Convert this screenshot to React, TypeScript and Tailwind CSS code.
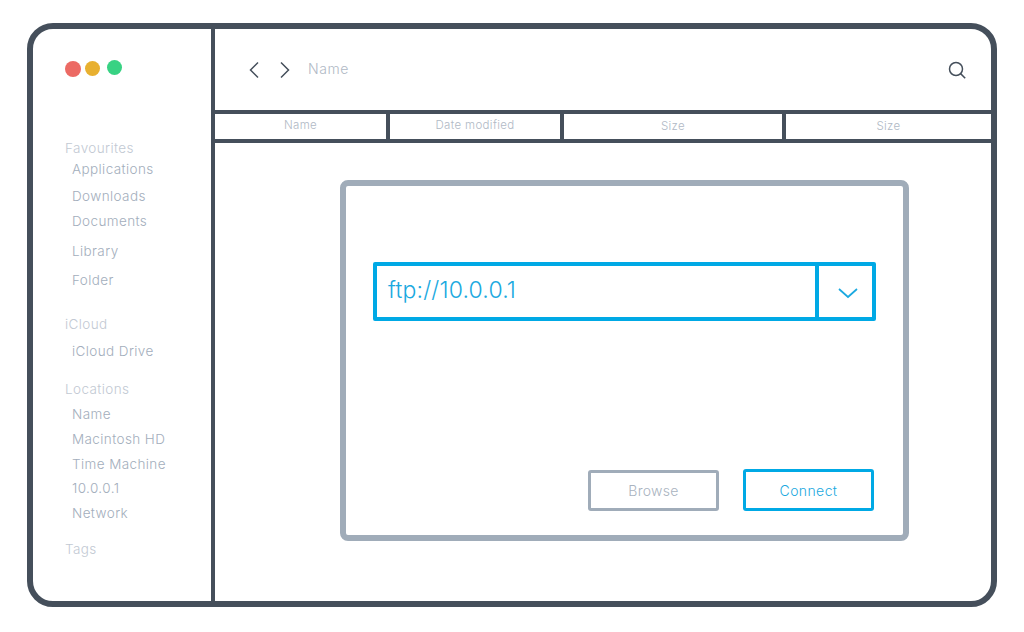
const font = "font-['Inter','Liberation_Sans',sans-serif]";

const sidebar: { label: string; cls: string }[] = [
  { label: "Favourites", cls: "mt-[61px] text-[#c2c9d3]" },
  { label: "Applications", cls: "mt-[1px] ml-[7px] text-[#a3aebc]" },
  { label: "Downloads", cls: "mt-[7px] ml-[7px] text-[#a3aebc]" },
  { label: "Documents", cls: "mt-[5px] ml-[7px] text-[#a3aebc]" },
  { label: "Library", cls: "mt-[10px] ml-[7px] text-[#a3aebc]" },
  { label: "Folder", cls: "mt-[9px] ml-[7px] text-[#a3aebc]" },
  { label: "iCloud", cls: "mt-[24px] text-[#c2c9d3]" },
  { label: "iCloud Drive", cls: "mt-[7px] ml-[7px] text-[#a3aebc]" },
  { label: "Locations", cls: "mt-[18px] text-[#c2c9d3]" },
  { label: "Name", cls: "mt-[5px] ml-[7px] text-[#a3aebc]" },
  { label: "Macintosh HD", cls: "mt-[5px] ml-[7px] text-[#a3aebc]" },
  { label: "Time Machine", cls: "mt-[5px] ml-[7px] text-[#a3aebc]" },
  { label: "10.0.0.1", cls: "mt-[4px] ml-[7px] text-[#a3aebc]" },
  { label: "Network", cls: "mt-[5px] ml-[7px] text-[#a3aebc]" },
  { label: "Tags", cls: "mt-[16px] text-[#c2c9d3]" },
];

export default function App() {
  return (
    <div className={`${font} w-[1024px] h-[632px] bg-white pt-[23px] pl-[27px] font-light`}>
      <div className="w-[970px] h-[584px] border-[6px] border-[#454f5b] rounded-[26px] flex overflow-hidden">
        <aside className="w-[182px] shrink-0 border-r-[4px] border-[#454f5b] pl-[32px] pt-[31px]">
          <div className="flex items-start">
            <span className="w-[16px] h-[16px] mt-[1px] rounded-full bg-[#ec6a64]" />
            <span className="w-[15px] h-[15px] ml-[4px] mt-[1px] rounded-full bg-[#e8b030]" />
            <span className="w-[15px] h-[15px] ml-[7px] rounded-full bg-[#38d283]" />
          </div>
          <div className="text-[13.5px] tracking-[0.4px] leading-[20px]">
            {sidebar.map((s) => (
              <div key={s.label + s.cls} className={s.cls}>
                {s.label}
              </div>
            ))}
          </div>
        </aside>
        <main className="flex-1 flex flex-col min-w-0">
          <div className="h-[85px] shrink-0 border-b-[4px] border-[#454f5b] flex items-center pl-[33px] pr-[25px]">
            <svg width="12" height="18" viewBox="0 0 12 18" fill="none" stroke="#454f5b" strokeWidth="1.5" className="mt-[1px]">
              <path d="M10 1.5 2.5 9l7.5 7.5" />
            </svg>
            <svg width="12" height="18" viewBox="0 0 12 18" fill="none" stroke="#454f5b" strokeWidth="1.5" className="ml-[19px] mt-[1px]">
              <path d="M2 1.5 9.5 9 2 16.5" />
            </svg>
            <span className="ml-[17px] text-[14px] tracking-[0.6px] text-[#b0b9c5] -mt-[3px]">Name</span>
            <svg width="18" height="18" viewBox="0 0 18 18" fill="none" stroke="#454f5b" strokeWidth="1.5" className="ml-auto mt-[1px]">
              <circle cx="8" cy="8" r="6.5" />
              <path d="m12.6 12.6 4.6 4.6" />
            </svg>
          </div>
          <div className="h-[29px] shrink-0 border-b-[4px] border-[#454f5b] flex text-[11.5px] tracking-[0.35px] text-[#b0b9c5]">
            <div className="w-[175px] border-r-[4px] border-[#454f5b] flex items-center justify-center pb-[2px]">Name</div>
            <div className="w-[174px] border-r-[4px] border-[#454f5b] flex items-center justify-center pb-[2px]">Date modified</div>
            <div className="w-[222px] border-r-[4px] border-[#454f5b] flex items-center justify-center pt-[1px]">Size</div>
            <div className="flex-1 flex items-center justify-center pt-[1px]">Size</div>
          </div>
          <div className="flex-1 pl-[125px] pt-[37px]">
            <div className="w-[569px] h-[361px] border-[6px] border-[#a0acb9] rounded-[8px] pl-[27px] pt-[76px] flex flex-col">
              <div className="w-[503px] h-[59px] border-[4px] border-[#00a9e5] rounded-[2px] flex">
                <div className="flex-1 border-r-[4px] border-[#00a9e5] flex items-center pl-[11px] text-[23px] tracking-[0.15px] text-[#1ba9e0] pb-[2px]">
                  ftp://10.0.0.1
                </div>
                <div className="w-[53px] flex items-center justify-center pl-[4px]">
                  <svg width="20" height="11" viewBox="0 0 20 11" fill="none" stroke="#1ba9e0" strokeWidth="1.7" className="mt-[3px]">
                    <path d="M1 1l9 8L19 1" />
                  </svg>
                </div>
              </div>
              <div className="flex items-start mt-[148px] ml-[215px]">
                <button className="w-[131px] h-[41px] mt-[1px] border-[3px] border-[#a0acb9] rounded-[3px] text-[14px] tracking-[0.3px] text-[#a9b3c0]">
                  Browse
                </button>
                <button className="w-[131px] h-[42px] ml-[24px] border-[3px] border-[#00a9e5] rounded-[3px] text-[14px] tracking-[0.4px] text-[#1ba9e0] pt-[1px]">
                  Connect
                </button>
              </div>
            </div>
          </div>
        </main>
      </div>
    </div>
  );
}
